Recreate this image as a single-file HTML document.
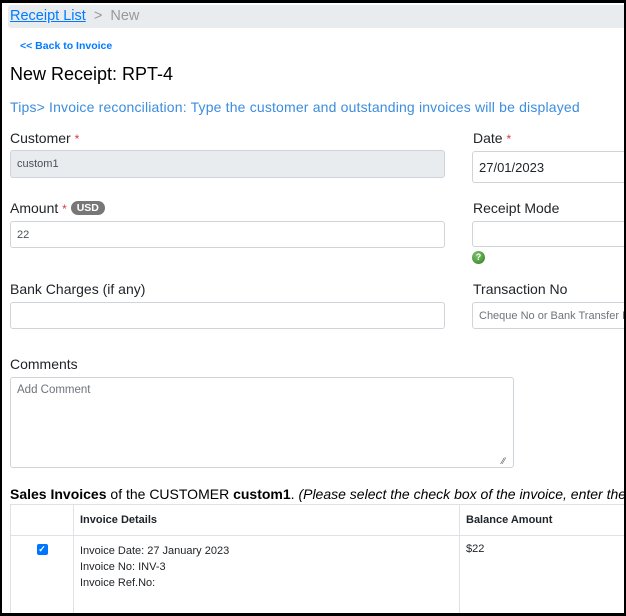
<!DOCTYPE html>
<html><head><style>
*{box-sizing:border-box;margin:0;padding:0}
html,body{width:626px;height:616px;overflow:hidden;background:#fff}
body{font-family:"Liberation Sans",sans-serif;color:#212529}
#w{position:relative;width:626px;height:616px;overflow:hidden}
.a{position:absolute;white-space:nowrap}
.inp{position:absolute;border:1px solid #ced4da;border-radius:3px;background:#fff;font-size:11px;color:#495057;padding-left:6px;display:flex;align-items:center;overflow:hidden;white-space:nowrap}
.lbl{position:absolute;font-size:14px;color:#212529;white-space:nowrap}
.req{color:#dc3545;font-size:12px}
.frame{position:absolute;left:0;top:0;width:626px;height:616px;border:2px solid #000;border-top-width:3px;border-bottom-width:3px;pointer-events:none}
td,th{border:1px solid #dee2e6}
</style></head><body><div id="w">
<div class="a" style="left:8px;top:5px;width:618px;height:23px;background:#e9ecef;border-radius:3px"></div>
<div class="a" style="left:10px;top:8px;font-size:14.5px;color:#999"><span style="color:#007bff;text-decoration:underline">Receipt List</span>&nbsp; &gt; &nbsp;New</div>
<div class="a" style="left:20px;top:40px;font-size:10.5px;color:#007bff;font-weight:bold">&lt;&lt; Back to Invoice</div>
<div class="a" style="left:10px;top:64px;font-size:18px;color:#000">New Receipt: RPT-4</div>
<div class="a" style="left:10px;top:99px;font-size:14px;color:#3c8dde;letter-spacing:0.17px">Tips&gt; Invoice reconciliation: Type the customer and outstanding invoices will be displayed</div>

<div class="lbl" style="left:10px;top:130px">Customer <span class="req">*</span></div>
<div class="inp" style="left:10px;top:150px;width:435px;height:28px;background:#e9ecef">custom1</div>
<div class="lbl" style="left:473px;top:130px">Date <span class="req">*</span></div>
<div class="inp" style="left:472px;top:151px;width:170px;height:32px;font-size:13px;color:#212529">27/01/2023</div>

<div class="lbl" style="left:10px;top:200px">Amount <span class="req">*</span> <span style="display:inline-block;background:#777;color:#fff;font-size:10.5px;font-weight:bold;border-radius:8px;padding:1px 6px;vertical-align:2px">USD</span></div>
<div class="inp" style="left:10px;top:221px;width:435px;height:27px">22</div>
<div class="lbl" style="left:473px;top:200px">Receipt Mode</div>
<div class="inp" style="left:472px;top:221px;width:170px;height:26px"></div>
<div class="a" style="left:472px;top:251px;width:13px;height:13px;border-radius:50%;background:radial-gradient(circle at 40% 35%,#7ec46e,#2f7d1e);color:#fff;font-size:9px;font-weight:bold;text-align:center;line-height:13px">?</div>

<div class="lbl" style="left:10px;top:281px">Bank Charges (if any)</div>
<div class="inp" style="left:10px;top:302px;width:435px;height:27px"></div>
<div class="lbl" style="left:473px;top:281px">Transaction No</div>
<div class="inp" style="left:472px;top:302px;width:170px;height:27px;color:#6c757d">Cheque No or Bank Transfer No</div>

<div class="lbl" style="left:10px;top:356px">Comments</div>
<div class="inp" style="left:10px;top:377px;width:504px;height:91px;align-items:flex-start;padding-top:6px;color:#6c757d;font-size:11.5px">Add Comment</div>
<div class="a" style="left:502px;top:456px;font-size:9px;color:#555">⁄⁄</div>

<div class="a" style="left:10px;top:486px;font-size:14px;color:#000"><b>Sales Invoices</b> of the CUSTOMER <b>custom1</b>. <i>(Please select the check box of the invoice, enter the amount</i></div>
<table class="a" style="left:10px;top:504px;border-collapse:collapse;width:640px;font-size:11px">
<tr style="height:31px"><th style="width:63px"></th><th style="width:386px;text-align:left;padding-left:6px">Invoice Details</th><th style="text-align:left;padding-left:6px">Balance Amount</th></tr>
<tr style="height:78px;vertical-align:top"><td style="text-align:center;padding-top:7px"><span style="display:inline-block;width:11px;height:11px;background:#0075ff;border-radius:2px;color:#fff;font-size:9px;line-height:11px;font-weight:bold">✓</span></td>
<td style="padding:7px 6px;line-height:16px">Invoice Date: 27 January 2023<br>Invoice No: INV-3<br>Invoice Ref.No:</td><td style="padding:7px 6px">$22</td></tr>
</table>
<div class="frame"></div>
</div></body></html>
